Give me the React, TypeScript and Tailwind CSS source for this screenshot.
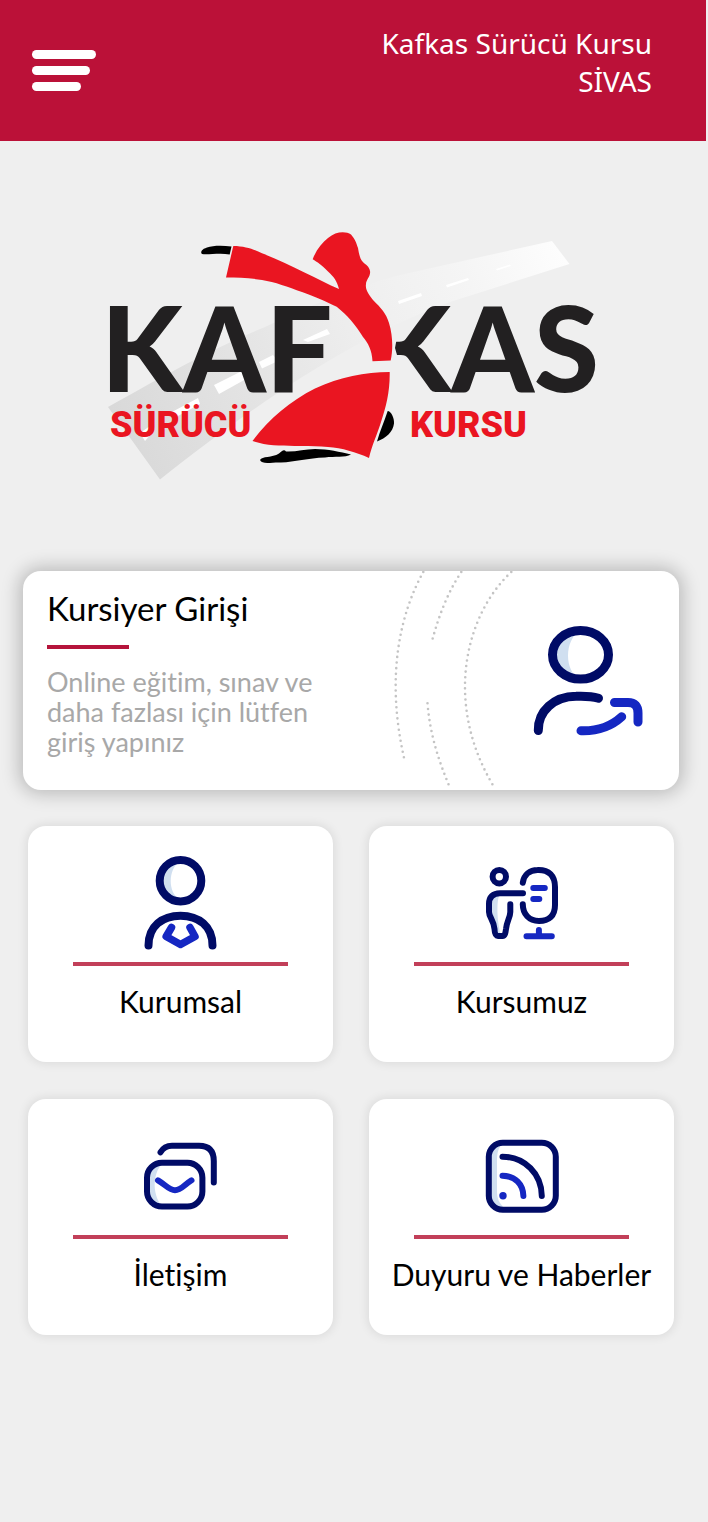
import React from 'react';

const NAVY = '#000b66';
const BLUE = '#1527c2';
const TINT = '#d0dff0';

function Logo() {
    return (
        <svg viewBox="96 220 510 270" className="w-full max-w-[510px]" role="img" aria-label="Kafkas Sürücü Kursu">
            <defs>
                <linearGradient id="road" gradientUnits="userSpaceOnUse" x1="130" y1="450" x2="560" y2="250">
                    <stop offset="0" stopColor="#d9d9d9" />
                    <stop offset="0.3" stopColor="#e4e4e4" />
                    <stop offset="0.55" stopColor="#eeeeee" />
                    <stop offset="0.8" stopColor="#f5f5f5" />
                    <stop offset="1" stopColor="#fdfdfd" />
                </linearGradient>
                <clipPath id="rightWord">
                    <path d="M406 290 H606 V400 H410 L395 348 Z" />
                </clipPath>
            </defs>
            <path d="M108 407 C170 372 220 345 265 327 C310 306 350 288 400 275 L552 241 L569.500 264 L450 302 C350 338 245 412 160 479.500 Z" fill="url(#road)" />
            <g fill="#fff">
                <path d="M214 385 L241 371.500 L246 379 L219 394 Z" />
                <path d="M259 362 L273 355 L278 361 L262 368.500 Z" />
                <path d="M303 340 L327 329 L330 334 L308 342 Z" />
                <path d="M172 412 L198 398 L200 404 L178 416 Z" />
                <path d="M140 433 L150 426 L152 433 L145 441 Z" />
                <path d="M398 301 L421 293 L422 296 L399 304 Z" />
                <path d="M446 285 L468 278 L469 280 L447 287.500 Z" />
                <path d="M496 269 L510 264.500 L511 266 L497 270.500 Z" />
            </g>
            <g fill="#222021" fontFamily="Lato, sans-serif" fontWeight="900" fontSize="118">
                <text x="101" y="392">KAF</text>
                <g clipPath="url(#rightWord)">
                    <text x="599" y="392" textAnchor="end">KAS</text>
                </g>
            </g>
            <g fill="#ea1521" fontFamily="Roboto, sans-serif" fontWeight="900" fontSize="36">
                <text x="110" y="437">SÜRÜCÜ</text>
                <text x="410" y="437">KURSU</text>
            </g>
            <g fill="#ea1521">
                <path d="M233.300 246 C246 246 255 250 262 253.300 C290 264 318 280 339 289 C337 281 334 277 328 271.500 C322 265 317 262 312.700 259.300 C316 250 322 243 328 238 C336 231 346 231 351 234.500 C355 239 356 242 358 248 C359 254 360 259 362.700 261.700 C366 265 369 266 370 271 C371 276 366 280 366 284 C365 290 369 295 373 300 C381 308 386 313 389 323 C393 336 393 350 390.700 360.500 L372.500 361.300 C372 350 368 343 363 337 C356 325 347 315 336.700 306.700 C325 301 315 297 302 292 C288 287 275 282 262 280 C250 278 238 277.500 226 277.500 Z" />
                <path d="M252.500 441 C268 420 290 401 315 388.500 C340 377 365 372 389.700 372 C390 392 386 407 381 422 C377 435 372 445 369 458 C356 452 342 448 328 447 C302 444 275 449 252.500 441 Z" />
            </g>
            <g fill="#000">
                <path d="M231.500 246.500 C222 245.500 213 245.500 207 247.500 C202 249 200 252 202 254 C208 255 220 252.500 229.700 254.500 Z" />
                <path d="M387.700 411 C391 411 394.500 418 394 423.500 C393 432 386 438 377 441.500 C380 431 384 422 387.700 411 Z" />
                <path d="M260 460 C262 456 272 458 279 453.500 C282 451 284 449 286 451.500 C296 452 305 449 315 449 C328 449 340 452 351 454.500 C345 458 335 456 325 457.500 C308 458 295 462 281 462.500 C272 462 262 465 260 460 Z" />
            </g>
        </svg>
    );
}

function DottedArcs() {
    return (
        <svg
            viewBox="393 571 120 219"
            className="h-[219px] w-[120px] shrink-0"
            fill="none"
            stroke="#c4c4c4"
            strokeWidth="2.600"
            strokeLinecap="round"
            strokeDasharray="0 5.600"
            aria-hidden="true"
        >
            <path d="M422.300 572 C400 612 384 675 403.300 759" />
            <path d="M460.300 572 C447 592 438 615 431 641" />
            <path d="M426.500 703.300 C429 735 438 762 449.500 789" />
            <path d="M510.300 572 C464 615 442 705 494.300 789" />
        </svg>
    );
}

function LoginIcon() {
    return (
        <svg viewBox="0 0 116 116" className="w-[116px] shrink-0" fill="none" strokeWidth="9" strokeLinecap="round" aria-hidden="true">
            <path d="M50 8 C12 9 12 56 50 57 C34 48 34 17 50 8 Z" fill={TINT} />
            <ellipse cx="50.500" cy="31.800" rx="28" ry="24.300" stroke={NAVY} />
            <path d="M8.300 107.500 C8 88 24 73.500 46 73.300 C54 73 62 73.300 68.500 75.200" stroke={NAVY} />
            <path d="M84.500 79.500 H98 Q108 79.500 108 90 V99" stroke={BLUE} />
            <path d="M51 107.800 C66 108.300 80 104.500 91.700 93.800" stroke={BLUE} />
        </svg>
    );
}

function CardIcon({ children }: { children: React.ReactNode }) {
    return (
        <svg
            viewBox="0 0 96 96"
            className="mx-auto size-24"
            fill="none"
            stroke={NAVY}
            strokeWidth="6"
            strokeLinecap="round"
            strokeLinejoin="round"
            aria-hidden="true"
        >
            {children}
        </svg>
    );
}

const cards = [
    {
        title: 'Kurumsal',
        icon: (
            <CardIcon>
                <path d="M46 7 C20 10 20 41 46 44 C35 37 35 15 46 7 Z" fill={TINT} stroke="none" />
                <circle cx="47.500" cy="25.700" r="20.800" strokeWidth="8" />
                <path d="M15.500 90.500 C15.500 71 29.500 60.700 47.500 60.700 S79.500 71 79.500 90.500" strokeWidth="8" />
                <path d="M38.500 72.500 L33.200 81.500 L47.500 89.500 L62 81.500 L57 72.500" stroke={BLUE} strokeWidth="7.500" />
            </CardIcon>
        ),
    },
    {
        title: 'Kursumuz',
        icon: (
            <CardIcon>
                <path d="M15 58 V49 C15 42 19 38.300 26 38.300 C22 46 23 66 27 81 H22 C20 72 19 65 15 58 Z" fill={TINT} stroke="none" />
                <circle cx="25.300" cy="21.700" r="6.700" />
                <path d="M49 38.300 H26 C19 38.300 15 42 15 49 V57 C15 62 20 66 20.500 74 C20.700 79 21.500 81 24 81 H28.500 C31 81 31.500 78 32 74 C32.500 67 36.300 62 36.300 57 V49.300" />
                <path d="M48.800 27.700 C50 19.500 56 15 63.500 15 C75 14.500 81 21 81 32 V50 C81 61 75 66 65 66 C55 66 48.800 59 48.800 49.300" />
                <path d="M59.300 33 H70.800 M59.300 44 H65.300 M64.900 75 V81 M52.500 81.300 H77.800" stroke={BLUE} />
            </CardIcon>
        ),
    },
    {
        title: 'İletişim',
        icon: (
            <CardIcon>
                <path d="M30 35 C18 35 14 42 14 52 V62 C14 72 20 79 30 79 C20 70 18 46 30 35 Z" fill={TINT} stroke="none" />
                <rect x="14" y="34.800" width="55.400" height="43.800" rx="15" />
                <path d="M27.500 24.300 C30 20 34 17.700 39 17.700 H66 C76 17.700 80.800 23 80.800 33 V54.500" />
                <path d="M25 52.300 C33 57 36 62.300 42 62.300 C48 62.300 51 57 58.500 52.300" stroke={BLUE} />
            </CardIcon>
        ),
    },
    {
        title: 'Duyuru ve Haberler',
        icon: (
            <CardIcon>
                <path d="M29 15 C20 15 15 20 15 29 V68 C15 77 20 82 33 82 C24 75 23 70 23 62 V34 C23 25 24 20 29 15 Z" fill={TINT} stroke="none" />
                <rect x="14.800" y="14.800" width="67" height="67" rx="14" />
                <path d="M28.500 28.700 C51 29 67.500 46 67.800 68" />
                <path d="M28.500 47.700 C41 48 49 56 49.400 68" stroke={BLUE} />
                <circle cx="29" cy="67.700" r="3.700" fill={BLUE} stroke="none" />
            </CardIcon>
        ),
    },
];

export default function App() {
    return (
        <div className="min-h-screen bg-[#efefef] font-[Lato,sans-serif] text-black [font-variant-ligatures:none]">
            <header className="mr-[2px] flex h-[141px] items-start justify-between bg-[#bb1138] pl-8 pr-[54px]">
                <button type="button" aria-label="Menü" className="mt-[50px] flex flex-col gap-[7px]">
                    <span className="h-[9px] w-16 rounded-full bg-white" />
                    <span className="h-[9px] w-[58px] rounded-full bg-white" />
                    <span className="h-[9px] w-[49px] rounded-full bg-white" />
                </button>
                <div className="mt-6 text-right font-['Noto_Sans',sans-serif] text-[28px] leading-[38px] text-white">
                    <h1>Kafkas Sürücü Kursu</h1>
                    <p>SİVAS</p>
                </div>
            </header>

            <main className="pl-[23px] pr-[29px] pb-16">
                <div className="flex justify-center pt-[79px] pb-[81px]">
                    <Logo />
                </div>

                <a href="#giris" className="flex items-center gap-4 overflow-hidden rounded-[18px] bg-white pl-6 pr-[33px] shadow-[0_0_18px_4px_rgba(0,0,0,0.22)]">
                    <div className="flex-1 self-start pt-[17px]">
                        <h2 className="text-[33px] leading-10">Kursiyer Girişi</h2>
                        <div className="mt-[17px] h-1 w-[82px] bg-[#b5143b]" />
                        <p className="mt-[18px] max-w-[290px] text-[27px] leading-[30px] text-[#a8a8a8]">
                            Online eğitim, sınav ve daha fazlası için lütfen giriş yapınız
                        </p>
                    </div>
                    <DottedArcs />
                    <LoginIcon />
                </a>

                <nav className="mt-9 grid grid-cols-2 gap-x-9 gap-y-[37px] px-[5px]">
                    {cards.map(card => (
                        <a
                            key={card.title}
                            href={`#${card.title}`}
                            className="rounded-[18px] bg-white pt-[29px] pb-[43px] text-center shadow-[0_0_10px_2px_rgba(0,0,0,0.08)]"
                        >
                            {card.icon}
                            <div className="mx-[45px] mt-[11px] h-1 bg-[#c23f59]" />
                            <h3 className="mt-[17px] text-[30px] leading-9 whitespace-nowrap">{card.title}</h3>
                        </a>
                    ))}
                </nav>
            </main>
        </div>
    );
}
